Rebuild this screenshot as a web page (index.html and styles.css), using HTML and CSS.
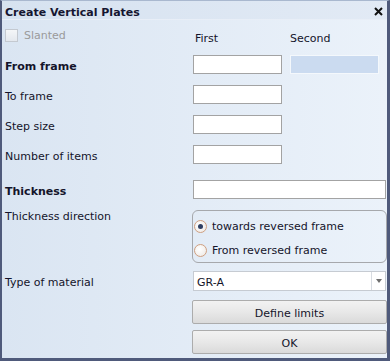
FILE: index.html
```html
<!DOCTYPE html>
<html lang="en">

<head>
    <meta charset="UTF-8">
    <title>Create Vertical Plates</title>
    <link rel="stylesheet" href="styles.css">
</head>

<body>
    <div class="window">
        <div class="titlebar">
            <span class="title">Create Vertical Plates</span>
            <svg class="close" width="9" height="9" viewBox="0 0 9 9">
                <path d="M1 1 L8 8 M8 1 L1 8" stroke="#111" stroke-width="2" />
            </svg>
        </div>
        <div class="form">
            <div class="row head">
                <label class="check disabled"><span class="box"></span>Slanted</label>
                <span class="col-title first">First</span>
                <span class="col-title">Second</span>
            </div>
            <div class="row r-from">
                <span class="label bold">From frame</span>
                <input class="field small" />
                <input class="field second" disabled />
            </div>
            <div class="row r-gap">
                <span class="label">To frame</span>
                <input class="field small" />
            </div>
            <div class="row r-gap">
                <span class="label">Step size</span>
                <input class="field small" />
            </div>
            <div class="row r-gap">
                <span class="label">Number of items</span>
                <input class="field small" />
            </div>
            <div class="row r-thick">
                <span class="label bold">Thickness</span>
                <input class="field wide" />
            </div>
            <div class="row r-dir">
                <span class="label dir-label">Thickness direction</span>
                <div class="group">
                    <label class="radio"><span class="dot checked"></span>towards reversed frame</label>
                    <label class="radio"><span class="dot"></span>From reversed frame</label>
                </div>
            </div>
            <div class="row r-mat">
                <span class="label">Type of material</span>
                <div class="combo">
                    <span class="combo-text">GR-A</span>
                    <span class="combo-btn"><span class="arrow"></span></span>
                </div>
            </div>
            <div class="row r-btn1">
                <span class="label"></span>
                <button class="btn">Define limits</button>
            </div>
            <div class="row r-btn2">
                <span class="label"></span>
                <button class="btn">OK</button>
            </div>
        </div>
    </div>
</body>

</html>
```

FILE: styles.css
```css
* {
    margin: 0;
    padding: 0;
    box-sizing: border-box;
}

body {
    font-family: "DejaVu Sans", Verdana, sans-serif;
    font-size: 11px;
    color: #14142a;
}

.window {
    width: 390px;
    height: 361px;
    background: linear-gradient(to right, #dae5f2, #ebf2fa);
    border-left: 2px solid #4f5a7b;
    border-right: 3px solid #4f5a7b;
    border-bottom: 3px solid #4f5a7b;
    border-top: 1px solid #a9b8cf;
}

.titlebar {
    height: 19px;
    display: flex;
    align-items: center;
    justify-content: space-between;
    padding: 0 4px 0 3px;
    background: linear-gradient(to right, #d6e2f0, #e2eaf5);
    border-bottom: 1px solid #e8eef7;
}

.title {
    font-weight: bold;
    color: #151530;
    padding-top: 4px;
}

.close {
    margin-top: 3px;
}

.form {
    display: flex;
    flex-direction: column;
    padding-left: 3px;
}

.row {
    display: flex;
    align-items: center;
}

.label {
    width: 188px;
    flex: none;
    padding-top: 3px;
}

.bold {
    font-weight: bold;
}

.head {
    margin-top: 8px;
    height: 20px;
    align-items: flex-start;
}

.check {
    display: flex;
    align-items: center;
    width: 190px;
    height: 14px;
}

.check.disabled {
    color: #9a9a9a;
}

.box {
    width: 13px;
    height: 13px;
    border: 1px solid #c4c9d0;
    background: linear-gradient(#f4f6f8, #e4e8ee);
    margin-right: 6px;
}

.col-title {
    margin-top: 4px;
}

.col-title.first {
    width: 95px;
}

.r-from {
    margin-top: 7px;
}

.r-gap {
    margin-top: 11px;
}

.r-thick {
    margin-top: 16px;
}

.field {
    height: 19px;
    border: 1px solid #a3a3a3;
    background: #fff;
    outline: none;
}

.small {
    width: 89px;
}

.second {
    width: 89px;
    margin-left: 8px;
    border-color: #f4f8fc;
    background: #cbdbf0;
}

.wide {
    width: 193px;
}

.r-dir {
    margin-top: 11px;
    align-items: flex-start;
}

.dir-label {
    padding-top: 0;
}

.group {
    width: 195px;
    height: 53px;
    margin-left: -1px;
    border: 1px solid #a6a8ac;
    border-radius: 6px;
    display: flex;
    flex-direction: column;
    padding: 9px 0 0 1px;
    gap: 11px;
}

.radio {
    display: flex;
    align-items: center;
    height: 13px;
}

.dot {
    width: 13px;
    height: 13px;
    border-radius: 50%;
    border: 1px solid #cf9f80;
    background: radial-gradient(circle at 40% 40%, #ffffff, #ece7e2);
    margin-right: 5px;
    display: flex;
    align-items: center;
    justify-content: center;
}

.dot.checked::after {
    content: "";
    width: 5px;
    height: 5px;
    border-radius: 50%;
    background: #2f3f63;
}

.r-mat {
    margin-top: 8px;
}

.combo {
    width: 193px;
    height: 20px;
    border: 1px solid #c6cbd2;
    background: #fff;
    display: flex;
    align-items: center;
}

.combo-text {
    flex: auto;
    padding: 2px 0 0 3px;
}

.combo-btn {
    width: 14px;
    height: 18px;
    border-left: 1px solid #d8dce2;
    display: flex;
    align-items: center;
    justify-content: center;
}

.arrow {
    width: 0;
    height: 0;
    border-left: 3px solid transparent;
    border-right: 3px solid transparent;
    border-top: 4px solid #6e6e6e;
}

.r-btn1 {
    margin-top: 9px;
}

.r-btn2 {
    margin-top: 6px;
}

.btn {
    width: 195px;
    height: 24px;
    margin-left: -1px;
    padding-top: 2px;
    border: 1px solid #acacac;
    border-radius: 2px;
    background: linear-gradient(#f2f2f2, #e8e8e8 50%, #dadada);
    font-family: inherit;
    font-size: 11px;
    color: #14142a;
}
```
